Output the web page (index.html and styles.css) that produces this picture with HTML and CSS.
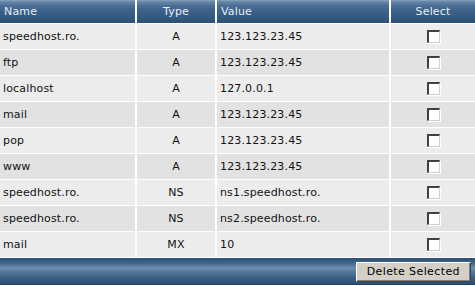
FILE: index.html
```html
<!DOCTYPE html>
<html>
<head>
<meta charset="utf-8">
<link rel="stylesheet" href="styles.css">
</head>
<body>
<table class="dns">
  <colgroup>
    <col class="c-name"><col class="c-type"><col class="c-value"><col class="c-select">
  </colgroup>
  <thead>
    <tr><th class="left">Name</th><th>Type</th><th class="left">Value</th><th>Select</th></tr>
  </thead>
  <tbody>
    <tr class="odd"><td>speedhost.ro.</td><td class="center">A</td><td>123.123.23.45</td><td class="center"><span class="cb"></span></td></tr>
    <tr class="even"><td>ftp</td><td class="center">A</td><td>123.123.23.45</td><td class="center"><span class="cb"></span></td></tr>
    <tr class="odd"><td>localhost</td><td class="center">A</td><td>127.0.0.1</td><td class="center"><span class="cb"></span></td></tr>
    <tr class="even"><td>mail</td><td class="center">A</td><td>123.123.23.45</td><td class="center"><span class="cb"></span></td></tr>
    <tr class="odd"><td>pop</td><td class="center">A</td><td>123.123.23.45</td><td class="center"><span class="cb"></span></td></tr>
    <tr class="even"><td>www</td><td class="center">A</td><td>123.123.23.45</td><td class="center"><span class="cb"></span></td></tr>
    <tr class="odd"><td>speedhost.ro.</td><td class="center">NS</td><td>ns1.speedhost.ro.</td><td class="center"><span class="cb"></span></td></tr>
    <tr class="even"><td>speedhost.ro.</td><td class="center">NS</td><td>ns2.speedhost.ro.</td><td class="center"><span class="cb"></span></td></tr>
    <tr class="odd"><td>mail</td><td class="center">MX</td><td>10</td><td class="center"><span class="cb"></span></td></tr>
  </tbody>
</table>
<div class="footer"><button class="btn">Delete Selected</button></div>
</body>
</html>
```
FILE: styles.css
```css
html, body { margin: 0; padding: 0; background: #ffffff; }
body { width: 475px; height: 286px; overflow: hidden; font-family: "DejaVu Sans", Verdana, sans-serif; font-size: 11px; color: #111; letter-spacing: 0.15px; }
.dns { width: 475px; border-collapse: separate; border-spacing: 0; table-layout: fixed; }
.c-name { width: 137px; }
.c-type { width: 80px; }
.c-value { width: 174px; }
.c-select { width: 84px; }
th {
  height: 24px; padding: 0 4px; font-weight: normal; color: #e6edf4; text-align: center;
  background: linear-gradient(#8aa3bc 0, #6385a8 2px, #4a6d93 6px, #3b6087 12px, #305479 21px, #2a4a6e 24px);
  border-right: 2px solid #ffffff; border-bottom: 1px solid #ffffff; box-sizing: border-box;
}
th:last-child { border-right: none; }
th.left { text-align: left; }
td {
  height: 26px; padding: 0 3px; box-sizing: border-box;
  border-right: 2px solid #ffffff; border-bottom: 1px solid #ffffff;
}
td:last-child { border-right: none; }
tr.odd td { background: #ececec; }
tr.even td { background: #e2e2e2; }
td.center { text-align: center; }
.cb {
  display: inline-block; width: 13px; height: 13px; box-sizing: border-box; vertical-align: middle;
  background: #ffffff; border-top: 2px solid #404040; border-left: 2px solid #404040;
  border-right: 1px solid #d4d0c8; border-bottom: 1px solid #d4d0c8;
  box-shadow: 1px 1px 0 #ffffff;
}
.footer {
  height: 27px; display: flex; justify-content: flex-end; align-items: center; padding-right: 4px; box-sizing: border-box;
  background: linear-gradient(#2c4f75 0, #3e6389 5px, #6e8fae 10px, #4e7296 15px, #3a5d82 20px, #2f5278 25px, #22405f 27px);
}
.btn {
  font-family: "DejaVu Sans", Verdana, sans-serif; font-size: 11px; color: #000; letter-spacing: 0.4px;
  height: 20px; padding: 0 10px; background: #d4d0c8;
  border: 1px solid; border-color: #ffffff #404040 #404040 #ffffff;
  box-shadow: inset -1px -1px 0 #808080;
}
```
